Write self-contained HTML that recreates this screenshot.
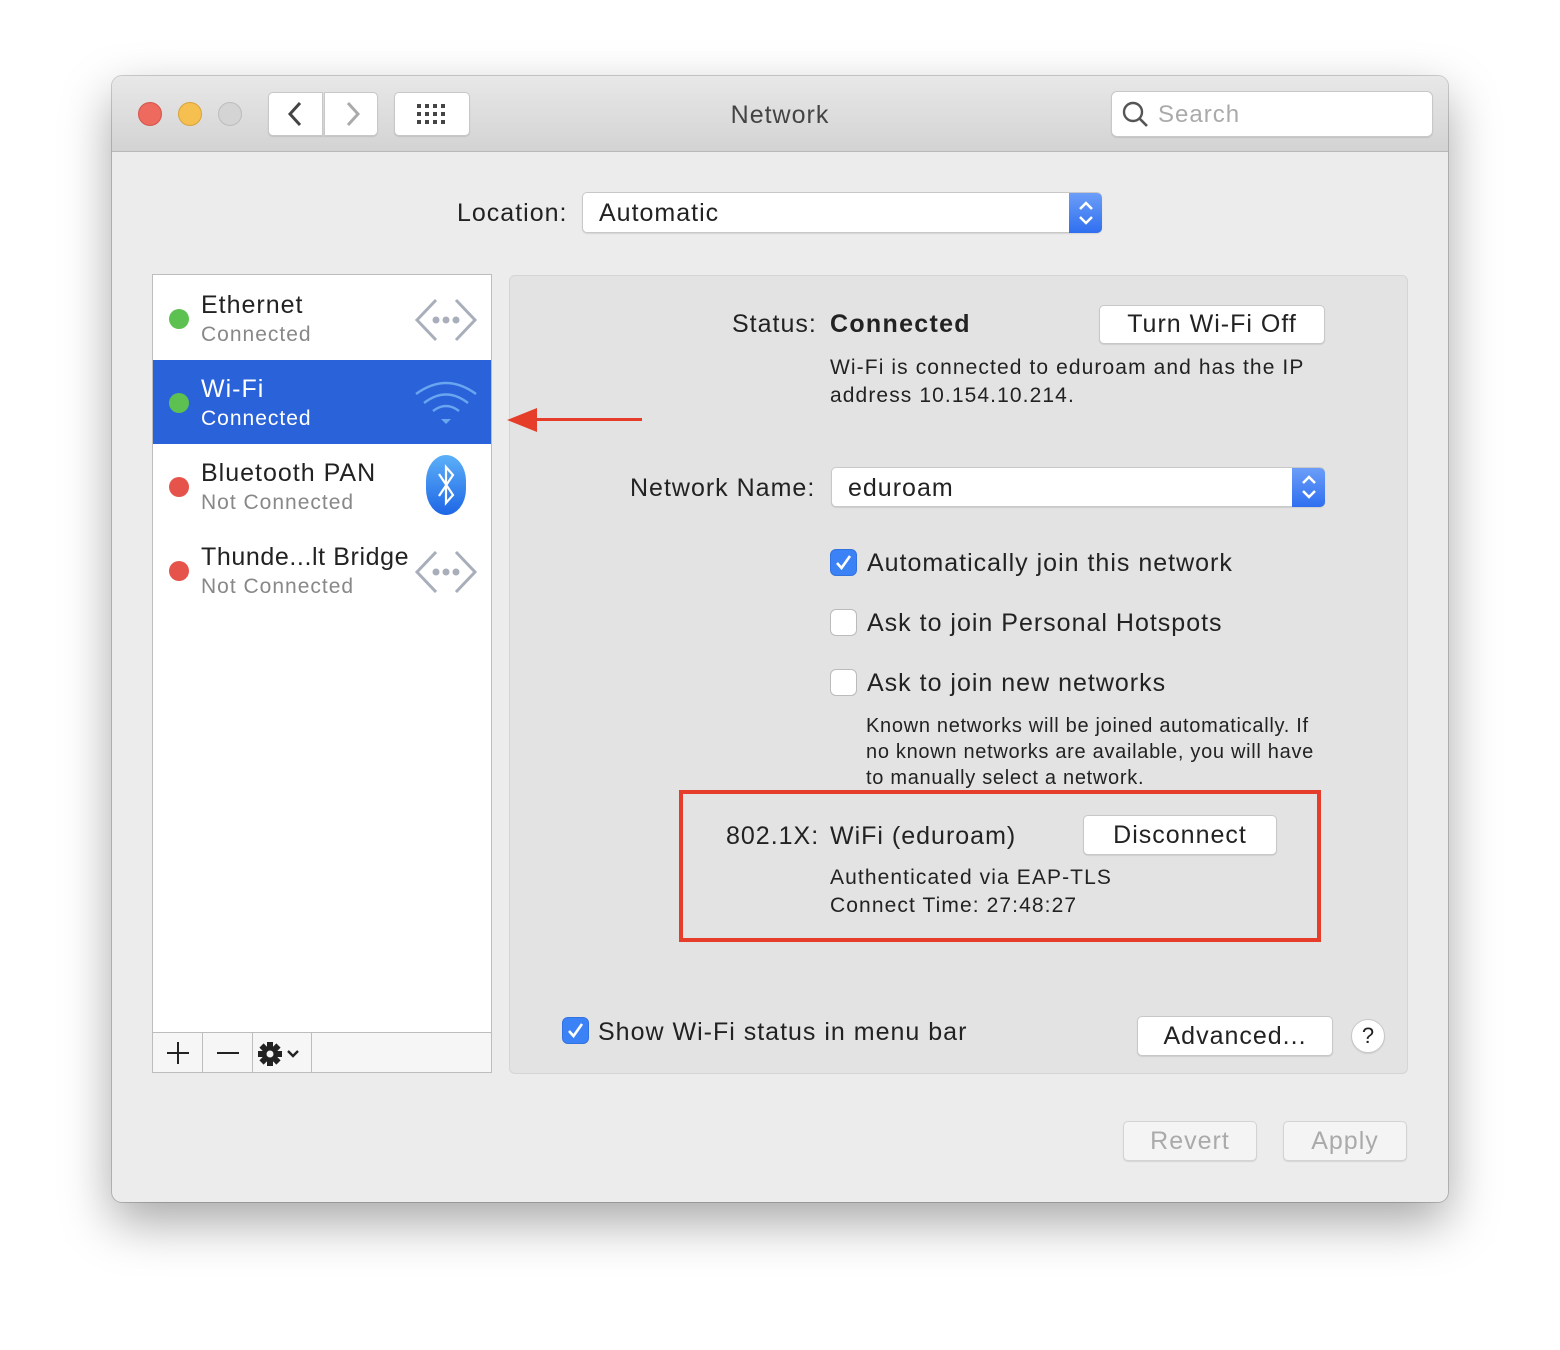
<!DOCTYPE html>
<html><head><style>
*{margin:0;padding:0;box-sizing:border-box}
body{width:1560px;height:1350px;background:#fff;font-family:"Liberation Sans",sans-serif;color:#222;position:relative;overflow:hidden;letter-spacing:1px}
.a{position:absolute;white-space:nowrap}
.win{position:absolute;left:112px;top:76px;width:1336px;height:1126px;border-radius:10px;background:#ececec;box-shadow:0 20px 50px rgba(0,0,0,.35),0 0 0 1px rgba(0,0,0,.18);overflow:hidden}
.tb{position:absolute;left:0;top:0;width:100%;height:76px;background:linear-gradient(#e8e8e8,#d3d3d3);border-bottom:1px solid #b8b8b8}
.light{position:absolute;top:26px;width:24px;height:24px;border-radius:50%}
.btn{position:absolute;background:#fff;border:1px solid #c8c8c8;border-radius:5px;box-shadow:0 1px 1px rgba(0,0,0,.1);text-align:center}
.cb{position:absolute;width:27px;height:27px;border-radius:6px;background:#fff;border:1px solid #bbb}
.cbon{background:#3b82f6;border-color:#3273e0}
.dot{position:absolute;left:16px;width:20px;height:20px;border-radius:50%}
</style></head><body>
<div class="win">
 <div class="tb">
  <div class="light" style="left:26px;background:#ee6a5f;border:1px solid #d4544a"></div>
  <div class="light" style="left:66px;background:#f5c04f;border:1px solid #d8a23a"></div>
  <div class="light" style="left:106px;background:#d4d4d4;border:1px solid #bcbcbc"></div>
  <div class="btn" style="left:156px;top:16px;width:55px;height:44px;border-radius:5px 0 0 5px"></div>
  <div class="btn" style="left:212px;top:16px;width:54px;height:44px;border-radius:0 5px 5px 0"></div>
  <svg class="a" style="left:172px;top:24px" width="24" height="28"><path d="M16 3 L6 14 L16 25" stroke="#444" stroke-width="3" fill="none"/></svg>
  <svg class="a" style="left:228px;top:24px" width="24" height="28"><path d="M8 3 L18 14 L8 25" stroke="#aaa" stroke-width="3" fill="none"/></svg>
  <div class="btn" style="left:282px;top:16px;width:76px;height:44px"></div>
  <svg class="a" style="left:305px;top:28px" width="30" height="22"><g fill="#444">
   <rect x="0" y="0" width="4" height="4"/><rect x="8" y="0" width="4" height="4"/><rect x="16" y="0" width="4" height="4"/><rect x="24" y="0" width="4" height="4"/>
   <rect x="0" y="8" width="4" height="4"/><rect x="8" y="8" width="4" height="4"/><rect x="16" y="8" width="4" height="4"/><rect x="24" y="8" width="4" height="4"/>
   <rect x="0" y="16" width="4" height="4"/><rect x="8" y="16" width="4" height="4"/><rect x="16" y="16" width="4" height="4"/><rect x="24" y="16" width="4" height="4"/></g></svg>
  <div class="a" style="left:0;width:1336px;text-align:center;top:25px;font-size:25px;color:#444">Network</div>
  <div class="btn" style="left:999px;top:15px;width:322px;height:46px;border-radius:6px"></div>
  <svg class="a" style="left:1010px;top:25px" width="28" height="28"><circle cx="11" cy="11" r="9" stroke="#555" stroke-width="2.4" fill="none"/><path d="M17.5 17.5 L25 25" stroke="#555" stroke-width="2.6"/></svg>
  <div class="a" style="left:1046px;top:25px;font-size:24px;color:#aaa">Search</div>
 </div>

 <div class="a" style="left:345px;top:123px;font-size:25px">Location:</div>
 <div class="btn" style="left:470px;top:116px;width:520px;height:41px;border-radius:5px;text-align:left"></div>
 <div class="a" style="left:487px;top:123px;font-size:25px">Automatic</div>
 <div class="a" style="left:957px;top:117px;width:33px;height:40px;background:linear-gradient(#6c9ef8,#2f6ff0);border-radius:0 5px 5px 0"></div>
 <svg class="a" style="left:962px;top:120px" width="24" height="34"><path d="M6 13 L12 7 L18 13 M6 21 L12 27 L18 21" stroke="#fff" stroke-width="2.5" fill="none"/></svg>

 <!-- sidebar -->
 <div class="a" style="left:40px;top:198px;width:340px;height:799px;background:#fff;border:1px solid #bdbdbd"></div>
 <div class="a" style="left:41px;top:284px;width:338px;height:84px;background:#2a62d9"></div>
 <div class="a" style="left:41px;top:199px;width:338px">
  <div class="dot" style="top:34px;background:#5cc150"></div>
  <div class="a" style="left:48px;top:16px;font-size:25px">Ethernet</div>
  <div class="a" style="left:48px;top:48px;font-size:21px;color:#888">Connected</div>
  <div class="dot" style="top:118px;background:#5cc150"></div>
  <div class="a" style="left:48px;top:100px;font-size:25px;color:#fff">Wi-Fi</div>
  <div class="a" style="left:48px;top:132px;font-size:21px;color:#fff">Connected</div>
  <div class="dot" style="top:202px;background:#e5534b"></div>
  <div class="a" style="left:48px;top:184px;font-size:25px">Bluetooth PAN</div>
  <div class="a" style="left:48px;top:216px;font-size:21px;color:#888">Not Connected</div>
  <div class="dot" style="top:286px;background:#e5534b"></div>
  <div class="a" style="left:48px;top:268px;font-size:25px;letter-spacing:0.6px">Thunde...lt Bridge</div>
  <div class="a" style="left:48px;top:300px;font-size:21px;color:#888">Not Connected</div>
 </div>
 <svg class="a" style="left:302px;top:222px" width="64" height="44"><path d="M22 2 L3 22 L22 42 M42 2 L61 22 L42 42" stroke="#a9aebb" stroke-width="3" fill="none"/><circle cx="22" cy="22" r="3.5" fill="#a9aebb"/><circle cx="32" cy="22" r="3.5" fill="#a9aebb"/><circle cx="42" cy="22" r="3.5" fill="#a9aebb"/></svg>
 <svg class="a" style="left:302px;top:474px" width="64" height="44"><path d="M22 2 L3 22 L22 42 M42 2 L61 22 L42 42" stroke="#a9aebb" stroke-width="3" fill="none"/><circle cx="22" cy="22" r="3.5" fill="#a9aebb"/><circle cx="32" cy="22" r="3.5" fill="#a9aebb"/><circle cx="42" cy="22" r="3.5" fill="#a9aebb"/></svg>
 <svg class="a" style="left:302px;top:302px" width="64" height="50"><g stroke="#6aa6f0" stroke-width="2.5" fill="none"><path d="M2 16 Q32 -6 62 16"/><path d="M10 25 Q32 8 54 25"/><path d="M19 33 Q32 23 45 33"/></g><path d="M27 41 L37 41 L32 46Z" fill="#6aa6f0"/></svg>
 <div class="a" style="left:314px;top:379px;width:40px;height:60px;border-radius:20px/26px;background:linear-gradient(#5cb0f8,#1e66e6)"></div>
 <svg class="a" style="left:314px;top:379px" width="40" height="60"><path d="M13 19 L27 40 L20 48 L20 12 L27 20 L13 41" stroke="#fff" stroke-width="2.2" fill="none"/></svg>
 <div class="a" style="left:41px;top:956px;width:338px;height:40px;background:#f6f6f6;border-top:1px solid #bdbdbd"></div>
 <div class="a" style="left:90px;top:956px;width:1px;height:40px;background:#bdbdbd"></div>
 <div class="a" style="left:140px;top:956px;width:1px;height:40px;background:#bdbdbd"></div>
 <div class="a" style="left:199px;top:956px;width:1px;height:40px;background:#bdbdbd"></div>
 <svg class="a" style="left:52px;top:964px" width="28" height="26"><path d="M14 2 V24 M3 13 H25" stroke="#222" stroke-width="2"/></svg>
 <svg class="a" style="left:102px;top:964px" width="28" height="26"><path d="M3 13 H25" stroke="#222" stroke-width="2"/></svg>
 <svg class="a" style="left:145px;top:964px" width="50" height="28"><g transform="translate(13,14)"><circle r="8" fill="#222"/><g fill="#222"><rect x="-3" y="-12" width="6" height="24"/><rect x="-12" y="-3" width="24" height="6"/><rect x="-3" y="-12" width="6" height="24" transform="rotate(45)"/><rect x="-3" y="-12" width="6" height="24" transform="rotate(-45)"/></g><circle r="3.5" fill="#f6f6f6"/></g><path d="M31 11 L36 16 L41 11" stroke="#222" stroke-width="2.4" fill="none"/></svg>

 <!-- right panel -->
 <div class="a" style="left:397px;top:199px;width:899px;height:799px;background:#e3e3e3;border:1px solid #d5d5d5;border-radius:6px"></div>

 <!-- arrow -->
 <div class="a" style="left:420px;top:342px;width:110px;height:3px;background:#e53d2a"></div>
 <svg class="a" style="left:395px;top:331px" width="32" height="26"><path d="M0 13 L30 1 L30 25Z" fill="#e53d2a"/></svg>

 <div class="a" style="left:620px;top:234px;font-size:25px">Status:</div>
 <div class="a" style="left:718px;top:234px;font-size:25px;font-weight:bold;letter-spacing:1.3px">Connected</div>
 <div class="btn" style="left:987px;top:229px;width:226px;height:39px;font-size:25px;line-height:37px">Turn Wi-Fi Off</div>
 <div class="a" style="left:718px;top:278px;font-size:21px;line-height:28px;letter-spacing:1.1px">Wi-Fi is connected to eduroam and has the IP<br>address 10.154.10.214.</div>
 <div class="a" style="left:518px;top:398px;font-size:25px">Network Name:</div>
 <div class="btn" style="left:719px;top:391px;width:494px;height:40px;border-radius:5px"></div>
 <div class="a" style="left:736px;top:398px;font-size:25px">eduroam</div>
 <div class="a" style="left:1180px;top:392px;width:33px;height:39px;background:linear-gradient(#6c9ef8,#2f6ff0);border-radius:0 5px 5px 0"></div>
 <svg class="a" style="left:1185px;top:394px" width="24" height="34"><path d="M6 13 L12 7 L18 13 M6 21 L12 27 L18 21" stroke="#fff" stroke-width="2.5" fill="none"/></svg>
 <div class="cb cbon" style="left:718px;top:473px"></div>
 <svg class="a" style="left:718px;top:473px" width="27" height="27"><path d="M7 14 L11.5 19 L20 7" stroke="#fff" stroke-width="2.6" fill="none"/></svg>
 <div class="a" style="left:755px;top:473px;font-size:25px">Automatically join this network</div>
 <div class="cb" style="left:718px;top:533px"></div>
 <div class="a" style="left:755px;top:533px;font-size:25px">Ask to join Personal Hotspots</div>
 <div class="cb" style="left:718px;top:593px"></div>
 <div class="a" style="left:755px;top:593px;font-size:25px">Ask to join new networks</div>
 <div class="a" style="left:754px;top:637px;font-size:20px;line-height:26px;letter-spacing:0.7px">Known networks will be joined automatically. If<br>no known networks are available, you will have<br>to manually select a network.</div>
 <div class="a" style="left:567px;top:714px;width:642px;height:152px;border:4px solid #e53d2a"></div>
 <div class="a" style="left:614px;top:746px;font-size:25px">802.1X:</div>
 <div class="a" style="left:718px;top:746px;font-size:25px">WiFi (eduroam)</div>
 <div class="btn" style="left:971px;top:739px;width:194px;height:40px;font-size:25px;line-height:38px">Disconnect</div>
 <div class="a" style="left:718px;top:788px;font-size:21px;line-height:28px;letter-spacing:1.1px">Authenticated via EAP-TLS<br>Connect Time: 27:48:27</div>
 <div class="cb cbon" style="left:450px;top:941px"></div>
 <svg class="a" style="left:450px;top:941px" width="27" height="27"><path d="M7 14 L11.5 19 L20 7" stroke="#fff" stroke-width="2.6" fill="none"/></svg>
 <div class="a" style="left:486px;top:942px;font-size:25px">Show Wi-Fi status in menu bar</div>
 <div class="btn" style="left:1025px;top:940px;width:196px;height:40px;font-size:25px;line-height:38px">Advanced...</div>
 <div class="btn" style="left:1239px;top:943px;width:34px;height:34px;border-radius:50%;font-size:22px;line-height:32px;letter-spacing:0">?</div>
 <div class="btn" style="left:1011px;top:1045px;width:134px;height:40px;font-size:25px;line-height:38px;color:#aaa;background:#f4f4f4;border-color:#d3d3d3">Revert</div>
 <div class="btn" style="left:1171px;top:1045px;width:124px;height:40px;font-size:25px;line-height:38px;color:#aaa;background:#f4f4f4;border-color:#d3d3d3">Apply</div>
</div>
</body></html>
